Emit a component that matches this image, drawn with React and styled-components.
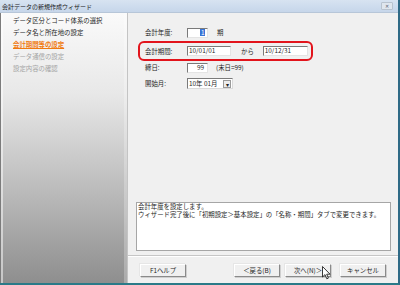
import React from 'react'
import styled, { createGlobalStyle } from 'styled-components'

const GlobalStyle = createGlobalStyle`
  html, body {
    margin: 0;
    padding: 0;
    background: #f0f0f0;
  }
  body {
    font-family: "Noto Sans CJK JP", "Liberation Sans", sans-serif;
  }
`

const steps = [
  { label: 'データ区分とコード体系の選択', state: 'done' },
  { label: 'データ名と所在地の設定', state: 'done' },
  { label: '会計期間等の設定', state: 'active' },
  { label: 'データ通信の設定', state: 'todo' },
  { label: '設定内容の確認', state: 'todo' },
]

const stepColors = {
  done: '#1e1e1e',
  active: '#f07a10',
  todo: '#a4a4a4',
}

const Cursor = () => (
  <CursorWrap>
    <svg width="9" height="14" viewBox="0 0 9 14">
      <path
        d="M0.5 0.5 L0.5 11 L3 8.6 L4.8 12.8 L6.4 12.1 L4.7 8.2 L8 8.2 Z"
        fill="#fff"
        stroke="#222"
        strokeWidth="0.9"
        strokeLinejoin="round"
      />
    </svg>
  </CursorWrap>
)

const App = () => {
  return (
    <>
      <GlobalStyle />
      <Window>
        <TitleBar>
          <Title>会計データの新規作成ウィザード</Title>
          <CloseBox>✕</CloseBox>
        </TitleBar>
        <Body>
          <Sidebar>
            {steps.map((s) => (
              <Step key={s.label} $state={s.state}>
                {s.label}
              </Step>
            ))}
          </Sidebar>
          <Main>
            <Form>
              <Row $top={0}>
                <Label>会計年度:</Label>
                <Input $w={21} $align="right">
                  <Selected>1</Selected>
                </Input>
                <After $ml={9}>期</After>
              </Row>
              <Highlight>
                <Row $top={0}>
                  <Label>会計期間:</Label>
                  <Input $w={44}>10/01/01</Input>
                  <After $ml={10}>から</After>
                  <Input $w={45} $ml={9}>10/12/31</Input>
                </Row>
              </Highlight>
              <Row $top={1}>
                <Label>締日:</Label>
                <Input $w={21} $align="right">99</Input>
                <After $ml={8}>(末日=99)</After>
              </Row>
              <Row $top={5}>
                <Label>開始月:</Label>
                <Select>
                  <span>10年 01月</span>
                  <Arrow>▾</Arrow>
                </Select>
              </Row>
            </Form>
            <Message>
              <Line>会計年度を設定します。</Line>
              <Line>ウィザード完了後に「初期設定＞基本設定」の「名称・期間」タブで変更できます。</Line>
            </Message>
            <Separator />
            <ButtonBar>
              <Button>F1ヘルプ</Button>
              <Spacer />
              <Button>＜戻る(B)</Button>
              <Button $ml={5}>次へ(N)＞</Button>
              <Button $ml={9}>キャンセル</Button>
              <Cursor />
            </ButtonBar>
          </Main>
        </Body>
      </Window>
    </>
  )
}

export default App

const Window = styled.div`
  width: 400px;
  height: 285px;
  box-sizing: border-box;
  display: flex;
  flex-direction: column;
  border-right: 2px solid #2f6a86;
  border-bottom: 2px solid #2a7a88;
  background: #f0f0f0;
  overflow: hidden;
`

const TitleBar = styled.div`
  height: 13px;
  flex: none;
  display: flex;
  align-items: center;
  justify-content: space-between;
  padding: 0 5px 0 2px;
  background: linear-gradient(#d7e3f1, #c6d6ea);
  border-bottom: 1px solid #b7c6d8;
  box-sizing: border-box;
`

const Title = styled.span`
  font-size: 6px;
  color: #1a1a1a;
  line-height: 13px;
`

const CloseBox = styled.span`
  width: 10px;
  height: 6px;
  font-size: 5px;
  line-height: 6px;
  text-align: center;
  color: #5a6470;
  background: #dfe6ee;
  border: 1px solid #b8c3cf;
  border-radius: 1px;
`

const Body = styled.div`
  flex: 1;
  display: flex;
  min-height: 0;
`

const Sidebar = styled.div`
  width: 128px;
  flex: none;
  box-sizing: border-box;
  padding: 2px 0 0 12px;
  border-left: 1px solid #7c7c7c;
  border-right: 1px solid #c4c4c4;
  background: linear-gradient(#fafafa 0%, #e8e8e8 30%, #bcbcbc 65%, #8e8e8e 100%);
  box-shadow: inset 2px 0 0 rgba(255, 255, 255, 0.5), inset -3px 0 0 rgba(255, 255, 255, 0.25);
`

const Step = styled.div`
  font-size: 6.4px;
  line-height: 12px;
  white-space: nowrap;
  color: ${(p) => stepColors[p.$state]};
  font-weight: ${(p) => (p.$state === 'active' ? 700 : 400)};
  text-decoration: ${(p) => (p.$state === 'active' ? 'underline' : 'none')};
`

const Main = styled.div`
  flex: 1;
  display: flex;
  flex-direction: column;
  background: #f0f0f0;
  min-width: 0;
`

const Form = styled.div`
  flex: 1;
  display: flex;
  flex-direction: column;
  padding-top: 14px;
`

const Row = styled.div`
  height: 11px;
  display: flex;
  align-items: center;
  padding-left: 17px;
  margin-top: ${(p) => p.$top}px;
  font-size: 6.4px;
  color: #1e1e1e;
`

const Highlight = styled.div`
  width: 175px;
  height: 20px;
  box-sizing: border-box;
  margin: 3px 0 0 10px;
  border: 2px solid #e2141c;
  border-radius: 6px;
  display: flex;
  align-items: center;

  ${Row} {
    padding-left: 5px;
  }
`

const Label = styled.span`
  width: 42px;
  flex: none;
  white-space: nowrap;
`

const Input = styled.div`
  width: ${(p) => p.$w}px;
  flex: none;
  height: 10px;
  margin-left: ${(p) => p.$ml || 0}px;
  box-sizing: border-box;
  background: #fff;
  border-top: 1px solid #7a7a7a;
  border-left: 1px solid #7a7a7a;
  border-right: 1px solid #e4e4e4;
  border-bottom: 1px solid #e4e4e4;
  display: flex;
  align-items: center;
  justify-content: ${(p) => (p.$align === 'right' ? 'flex-end' : 'flex-start')};
  padding: 0 3px 0 1px;
  font-size: 6.4px;
  line-height: 8px;
  white-space: nowrap;
`

const Selected = styled.span`
  background: #3875d7;
  color: #fff;
  padding: 0 0.5px;
  line-height: 7px;
  margin-right: -1px;
`

const After = styled.span`
  flex: none;
  margin-left: ${(p) => p.$ml}px;
  white-space: nowrap;
`

const Select = styled.div`
  width: 46px;
  height: 11px;
  box-sizing: border-box;
  background: #fff;
  border-top: 1px solid #7a7a7a;
  border-left: 1px solid #7a7a7a;
  border-right: 1px solid #dadada;
  border-bottom: 1px solid #dadada;
  display: flex;
  align-items: center;
  justify-content: space-between;
  padding-left: 1px;
  white-space: nowrap;
`

const Arrow = styled.span`
  width: 8px;
  height: 8px;
  margin-right: 1px;
  font-size: 6px;
  line-height: 8px;
  text-align: center;
  color: #222;
  background: #ececec;
  border: 0.5px solid #9a9a9a;
  box-sizing: border-box;
`

const Message = styled.div`
  height: 49px;
  margin: 0 7px 0 8px;
  box-sizing: border-box;
  background: #fff;
  border: 1px solid #a6a6a6;
  padding: 0 1px;
  color: #1e1e1e;
  white-space: nowrap;
`

const Line = styled.div`
  font-size: 6.4px;
  height: 7.5px;
  line-height: 7.5px;
`

const Separator = styled.div`
  height: 0;
  margin-top: 4px;
  border-top: 1px solid #c6c6c6;
  border-bottom: 1px solid #ffffff;
`

const ButtonBar = styled.div`
  position: relative;
  display: flex;
  align-items: flex-start;
  padding: 7px 12px 0 12px;
  height: 26px;
  box-sizing: border-box;
`

const Spacer = styled.div`
  flex: 1;
`

const Button = styled.div`
  width: 46px;
  height: 13px;
  margin-left: ${(p) => p.$ml || 0}px;
  box-sizing: border-box;
  display: flex;
  align-items: center;
  justify-content: center;
  font-size: 6.4px;
  color: #1e1e1e;
  background: #f0f0f0;
  border-top: 1px solid #ffffff;
  border-left: 1px solid #ffffff;
  border-right: 1px solid #8a8a8a;
  border-bottom: 1px solid #8a8a8a;
  box-shadow: 1px 1px 0 #cfcfcf, -1px -1px 0 #e6e6e6;
  white-space: nowrap;
`

const CursorWrap = styled.div`
  position: absolute;
  left: 194px;
  top: 9px;
  line-height: 0;
`
